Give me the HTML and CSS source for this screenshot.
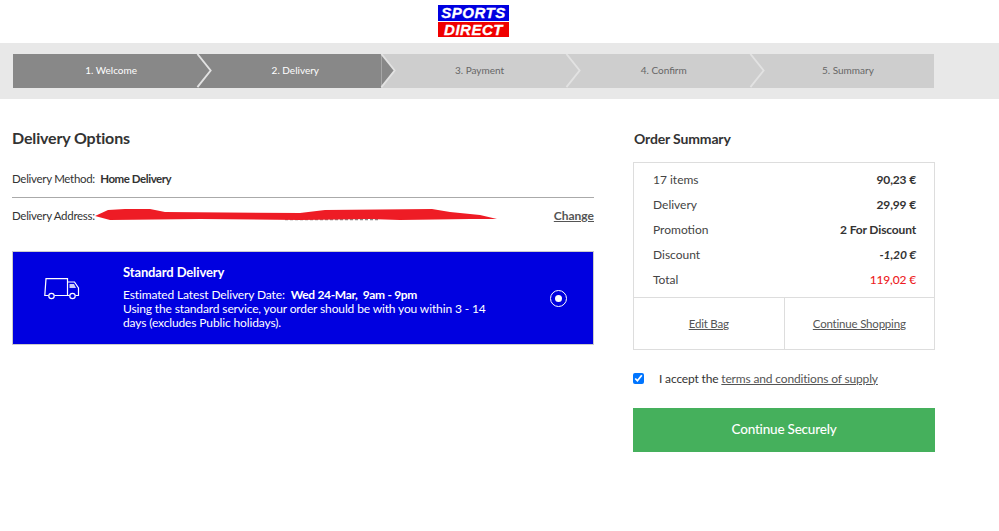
FILE: index.html
```html
<!DOCTYPE html>
<html>
  <head>
    <meta charset='utf-8'>
    <title>Sports Direct - Checkout</title>
    <link rel="stylesheet" href="styles.css">
  </head>

  <body>
    <header class="top">
      <div class="logo">
        <span class="logo-line blue">SPORTS</span>
        <span class="logo-line red">DIRECT</span>
      </div>
    </header>

    <nav class="steps-bar">
      <ol class="steps">
        <li class="step done">
          <span>1. Welcome</span>
          <svg class="chevron" viewBox="0 0 17 36"><path class="arrow" d="M1 0L15 17.500 1 35z"/><path class="line" d="M1 0L15 17.500 1 35"/></svg>
        </li>
        <li class="step done">
          <span>2. Delivery</span>
          <svg class="chevron" viewBox="0 0 17 36"><path class="arrow" d="M1 0L15 17.500 1 35z"/><path class="line" d="M1 0L15 17.500 1 35"/></svg>
        </li>
        <li class="step">
          <span>3. Payment</span>
          <svg class="chevron" viewBox="0 0 17 36"><path class="line" d="M1 0L15 17.500 1 35"/></svg>
        </li>
        <li class="step">
          <span>4. Confirm</span>
          <svg class="chevron" viewBox="0 0 17 36"><path class="line" d="M1 0L15 17.500 1 35"/></svg>
        </li>
        <li class="step"><span>5. Summary</span></li>
      </ol>
    </nav>

    <main class="container">
      <section class="options">
        <h1>Delivery Options</h1>
        <p class="method">Delivery Method:&nbsp; <b>Home Delivery</b></p>
        <div class="address">
          <span>Delivery Address:</span>
          <a href="#">Change</a>
          <svg class="scribble" viewBox="0 0 410 16">
            <path class="hidden-text" d="M190 11.500H285M380 10H394"/>
            <path d="M0 8L13 2 30 1 55 1 70 4 205 5 230 2 337 1 355 4 385 7 402 11 375 11 305 12 275 11 205 12 105 11 15 12z"/>
          </svg>
        </div>

        <div class="card">
          <svg class="truck" viewBox="0 0 36 22">
            <path d="M4.500 17.500H0.800L2 0.700H23.500V17.500H10.500M25.500 17.500H23.500"/>
            <path d="M23.500 4H30.500L34.500 10V17.500H31.500"/>
            <path class="cab-window" d="M25.500 6H30L32 10H25.500z"/>
            <circle cx="7.500" cy="18" r="2.700"/>
            <circle cx="28.500" cy="18" r="2.700"/>
          </svg>
          <div class="card-text">
            <h2>Standard Delivery</h2>
            <p>Estimated Latest Delivery Date:&nbsp; <b>Wed 24-Mar,&nbsp; 9am - 9pm</b></p>
            <p>Using the standard service, your order should be with you within 3 - 14 days (excludes Public holidays).</p>
          </div>
          <span class="radio"></span>
        </div>
      </section>

      <aside class="summary">
        <h2>Order Summary</h2>
        <div class="summary-box">
          <dl class="lines">
            <div class="line-row"><dt>17 items</dt><dd>90,23 €</dd></div>
            <div class="line-row"><dt>Delivery</dt><dd>29,99 €</dd></div>
            <div class="line-row"><dt>Promotion</dt><dd>2 For Discount</dd></div>
            <div class="line-row"><dt>Discount</dt><dd class="discount">-1,20 €</dd></div>
            <div class="line-row"><dt>Total</dt><dd class="total">119,02 €</dd></div>
          </dl>
          <div class="links">
            <a href="#">Edit Bag</a>
            <a href="#">Continue Shopping</a>
          </div>
        </div>
        <label class="terms">
          <input type="checkbox" checked>
          <span>I accept the <a href="#">terms and conditions of supply</a></span>
        </label>
        <button class="continue">Continue Securely</button>
      </aside>
    </main>
  </body>
</html>
```

FILE: styles.css
```css
body {
  margin: 0;
  font-family: Lato, "Open Sans", sans-serif;
  font-size: 12px;
  color: #333;
  background: #fff;
}

a {
  color: #555;
}

.top {
  display: flex;
  justify-content: center;
  height: 43px;
  padding: 5px 52px 0 0;
  box-sizing: border-box;
}

.logo {
  display: flex;
  flex-direction: column;
  gap: 1px;
  width: 71px;
}

.logo-line {
  height: 15.500px;
  line-height: 16px;
  color: #fff;
  font-family: "Liberation Sans", sans-serif;
  font-size: 15px;
  font-weight: 700;
  font-style: italic;
  text-align: center;
  letter-spacing: 0.5px;
  -webkit-text-stroke: 0.3px #fff;
}

.logo-line.blue {
  background: #0000e0;
}

.logo-line.red {
  background: #f00000;
}

.steps-bar {
  background: #e8e8e8;
  padding: 11px 65px 11px 13px;
}

.steps {
  display: flex;
  margin: 0;
  padding: 0;
  list-style: none;
  background: #cecece;
}

.step {
  position: relative;
  display: flex;
  flex: 1;
  align-items: center;
  justify-content: center;
  box-sizing: border-box;
  height: 34px;
  padding: 0 0 2px 12px;
  font-size: 10px;
  color: #666;
}

.step.done {
  background: #888;
  color: #fff;
}

.chevron {
  position: absolute;
  top: 0;
  left: 100%;
  width: 17px;
  height: 34px;
  z-index: 1;
  margin-left: -1px;
}

.chevron .arrow {
  fill: #888;
}

.chevron .line {
  fill: none;
  stroke: #e2e2e2;
  stroke-width: 2;
}

.container {
  display: flex;
  justify-content: space-between;
  padding: 30px 64px 0 12px;
}

.options {
  width: 582px;
}

.options h1 {
  margin: 0;
  font-size: 16px;
  line-height: 18px;
  font-weight: 700;
  letter-spacing: -0.15px;
  color: #333;
}

.method {
  margin: 24px 0 0;
  padding-bottom: 10px;
  line-height: 16px;
  font-size: 11.500px;
  letter-spacing: -0.3px;
  border-bottom: 1px solid #aaa;
}

.method b {
  font-weight: 700;
  letter-spacing: -0.45px;
}

.address {
  position: relative;
  display: flex;
  justify-content: space-between;
  align-items: center;
  height: 35px;
  font-size: 11.500px;
  letter-spacing: -0.3px;
}

.address a {
  font-size: 12px;
  font-weight: 700;
  letter-spacing: 0;
  color: #555;
}

.scribble {
  position: absolute;
  top: 10px;
  left: 83px;
  width: 410px;
  height: 16px;
}

.scribble path {
  fill: #ee1c25;
}

.scribble .hidden-text {
  fill: none;
  stroke: #888;
  stroke-width: 1.500;
  stroke-dasharray: 3 2;
}

.card {
  display: flex;
  align-items: center;
  height: 92px;
  margin-top: 18px;
  background: #0000e0;
  border: 1px solid #ccc;
  color: #fff;
}

.truck {
  flex: none;
  width: 36px;
  height: 22px;
  margin: 0 0 18px 31px;
  fill: none;
  stroke: #fff;
  stroke-width: 1.200;
}

.truck .cab-window {
  fill: #fff;
  stroke: none;
  opacity: 0.8;
}

.card-text {
  width: 365px;
  margin-left: 43px;
  padding-bottom: 1px;
  font-size: 12px;
  line-height: 14px;
  letter-spacing: -0.13px;
}

.card-text h2 {
  margin: 0 0 9px;
  font-size: 13px;
  line-height: 14px;
  font-weight: 700;
}

.card-text b {
  letter-spacing: -0.33px;
}

.card-text p {
  margin: 0;
}

.radio {
  position: relative;
  flex: none;
  width: 15px;
  height: 15px;
  margin-left: 62px;
  border: 1px solid #fff;
  border-radius: 50%;
}

.radio::after {
  content: "";
  position: absolute;
  top: 4px;
  left: 4px;
  width: 7px;
  height: 7px;
  border-radius: 50%;
  background: #fff;
}

.summary {
  width: 302px;
}

.summary h2 {
  margin: 0 0 13px 1px;
  font-size: 14px;
  line-height: 20px;
  font-weight: 700;
  letter-spacing: -0.15px;
  color: #333;
}

.summary-box {
  border: 1px solid #ddd;
}

.lines {
  margin: 0;
  padding: 4px 18px 5px 19px;
  border-bottom: 1px solid #ddd;
}

.line-row {
  display: flex;
  justify-content: space-between;
  align-items: center;
  height: 25px;
}

.line-row dt {
  color: #444;
}

.line-row dd {
  margin: 0;
  font-weight: 700;
  letter-spacing: -0.15px;
  color: #333;
}

.line-row .discount {
  font-style: italic;
}

.line-row .total {
  font-weight: 500;
  color: #ed1c24;
}

.links {
  display: flex;
  height: 51px;
}

.links a {
  display: flex;
  flex: 1;
  align-items: center;
  justify-content: center;
  font-size: 11.500px;
  letter-spacing: -0.2px;
}

.links a + a {
  border-left: 1px solid #ddd;
}

.terms {
  display: flex;
  align-items: center;
  gap: 15px;
  height: 20px;
  margin-top: 18px;
  font-size: 12px;
  letter-spacing: -0.16px;
}

.terms input {
  width: 11px;
  height: 11px;
  margin: 0;
}

.continue {
  display: block;
  width: 302px;
  height: 44px;
  margin-top: 20px;
  padding: 0 0 2px;
  border: 0;
  background: #45b05c;
  color: #fff;
  font-family: inherit;
  font-size: 13.500px;
  font-weight: 500;
  letter-spacing: -0.2px;
}
```
